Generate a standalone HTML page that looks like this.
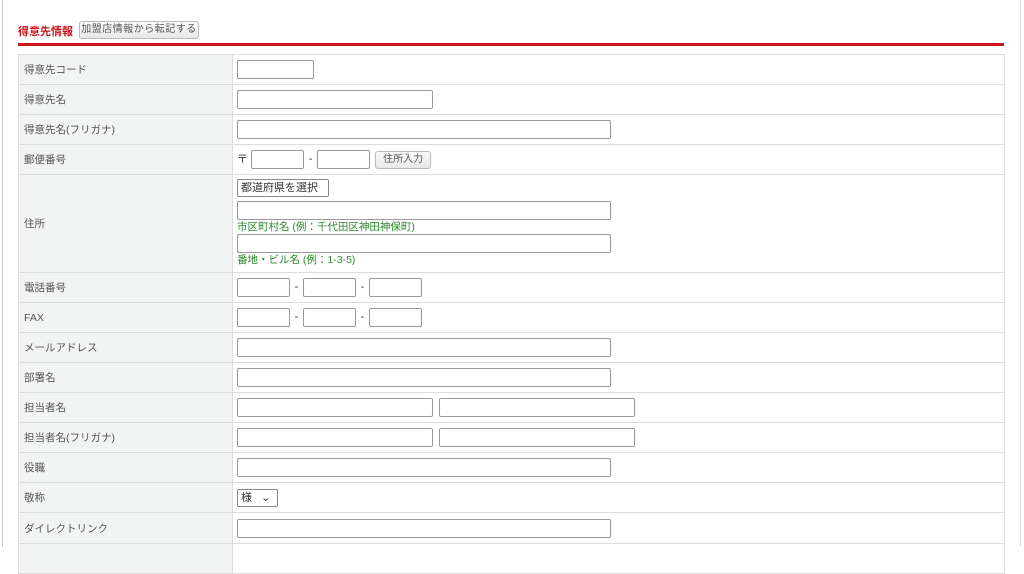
<!DOCTYPE html>
<html><head><meta charset="utf-8"><style>
body{margin:0;width:1024px;height:547px;background:#fff;font-family:"Liberation Sans","Noto Sans CJK JP",sans-serif;font-size:11px;color:#333;position:relative;overflow:hidden}
.lb{position:absolute;left:2px;top:0;width:1px;height:547px;background:#ccc}
.rb{position:absolute;left:1020px;top:0;width:1px;height:547px;background:#ddd}
.title{position:absolute;left:18px;top:23px;color:#c8161d;font-weight:bold;font-size:11px}
.btn{position:absolute;border:1px solid #bbb;border-radius:3px;background:linear-gradient(#fafafa,#e8e8e8);font-size:10px;color:#555;text-align:center;box-sizing:border-box}
.red{position:absolute;left:18px;top:43px;width:986px;height:3px;background:#d0121b}
table{position:absolute;left:18px;top:54px;width:987px;border-collapse:collapse}
td{border:1px solid #ddd;height:29px;padding:0;vertical-align:middle}
td.l{background:#f2f3f3;width:208px;padding-left:5px;color:#555;font-size:10.5px}
td.v{padding-left:4px;position:relative}
.i{display:inline-block;height:19px;border:1px solid #999;border-radius:2px;box-sizing:border-box;vertical-align:middle;background:#fff}
.d{display:inline-block;width:13px;text-align:center}
.g{color:#2c8a2c;font-size:10.5px;line-height:13px;margin-top:1px}
.sel{display:inline-block;height:18px;border:1px solid #888;border-radius:2px;box-sizing:border-box;font-size:11px;line-height:16px;padding-left:3px;vertical-align:middle;background:#fff}
</style></head><body>
<div class="lb"></div><div class="rb"></div>
<div class="title">得意先情報</div>
<div class="btn" style="left:79px;top:21px;width:120px;height:18px;line-height:16px;letter-spacing:0.5px">加盟店情報から転記する</div>
<div class="red"></div>
<table>
<tr><td class="l">得意先コード</td><td class="v"><span class="i" style="width:77px"></span></td></tr>
<tr><td class="l">得意先名</td><td class="v"><span class="i" style="width:196px"></span></td></tr>
<tr><td class="l">得意先名(フリガナ)</td><td class="v"><span class="i" style="width:374px"></span></td></tr>
<tr><td class="l">郵便番号</td><td class="v">〒 <span class="i" style="width:53px"></span><span class="d">-</span><span class="i" style="width:53px"></span> <span class="btn" style="position:static;display:inline-block;width:56px;height:18px;line-height:16px;vertical-align:middle;margin-left:2px">住所入力</span></td></tr>
<tr><td class="l" style="height:97px">住所</td><td class="v" style="vertical-align:top;padding-top:4px">
<span class="sel" style="width:92px">都道府県を選択 ⌄</span><br>
<span class="i" style="width:374px;margin-top:4px"></span><div class="g">市区町村名 (例：千代田区神田神保町)</div>
<span class="i" style="width:374px;margin-top:0"></span><div class="g">番地・ビル名 (例：1-3-5)</div></td></tr>
<tr><td class="l">電話番号</td><td class="v"><span class="i" style="width:53px"></span><span class="d">-</span><span class="i" style="width:53px"></span><span class="d">-</span><span class="i" style="width:53px"></span></td></tr>
<tr><td class="l">FAX</td><td class="v"><span class="i" style="width:53px"></span><span class="d">-</span><span class="i" style="width:53px"></span><span class="d">-</span><span class="i" style="width:53px"></span></td></tr>
<tr><td class="l">メールアドレス</td><td class="v"><span class="i" style="width:374px"></span></td></tr>
<tr><td class="l">部署名</td><td class="v"><span class="i" style="width:374px"></span></td></tr>
<tr><td class="l">担当者名</td><td class="v"><span class="i" style="width:196px"></span> &nbsp;<span class="i" style="width:196px"></span></td></tr>
<tr><td class="l">担当者名(フリガナ)</td><td class="v"><span class="i" style="width:196px"></span> &nbsp;<span class="i" style="width:196px"></span></td></tr>
<tr><td class="l">役職</td><td class="v"><span class="i" style="width:374px"></span></td></tr>
<tr><td class="l">敬称</td><td class="v"><span class="sel" style="width:41px">様 &nbsp;&nbsp;⌄</span></td></tr>
<tr><td class="l" style="height:30px">ダイレクトリンク</td><td class="v"><span class="i" style="width:374px"></span></td></tr>
<tr><td class="l"></td><td class="v"></td></tr>
</table>
</body></html>
